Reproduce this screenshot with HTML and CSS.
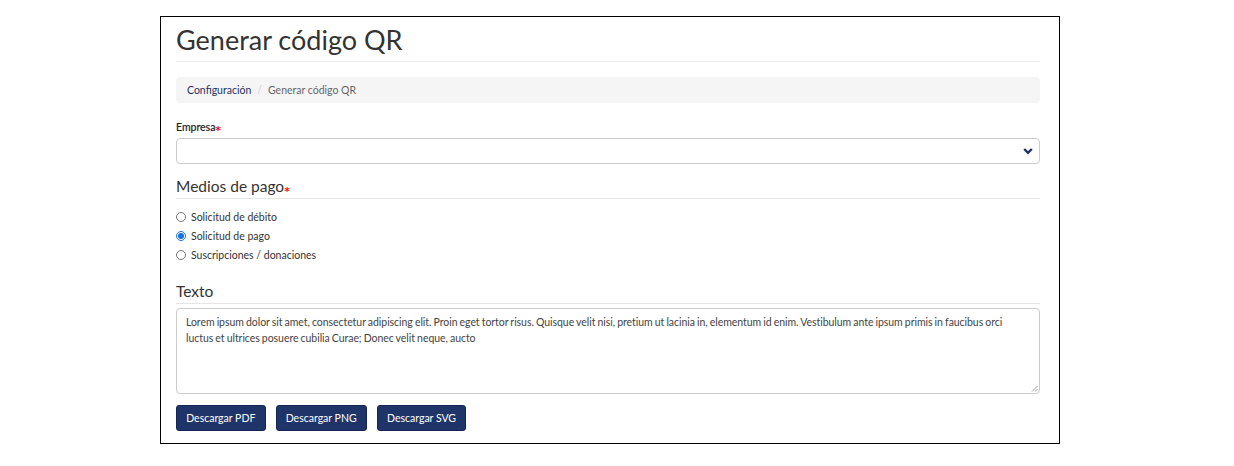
FILE: index.html
```html
<!DOCTYPE html>
<html lang="es">
<head>
<meta charset="utf-8">
<link rel="stylesheet" href="styles.css">
</head>
<body>
<div class="panel">
  <h1 class="title">Generar código QR</h1>
  <nav class="crumbs"><a class="crumb-link">Configuración</a><span class="sep">/</span><span class="crumb-cur">Generar código QR</span></nav>
  <label class="label">Empresa<span class="req">*</span></label>
  <div class="select">
    <svg class="chev" width="10" height="8" viewBox="0 0 10 8"><path d="M1.2 2 L5 5.8 L8.8 2" fill="none" stroke="#1f3163" stroke-width="2.4"/></svg>
  </div>
  <h2 class="section">Medios de pago<span class="req">*</span></h2>
  <div class="radios">
    <label class="radio"><span class="dot"></span>Solicitud de débito</label>
    <label class="radio"><span class="dot on"></span>Solicitud de pago</label>
    <label class="radio"><span class="dot"></span>Suscripciones / donaciones</label>
  </div>
  <h2 class="section texto">Texto</h2>
  <div class="textarea">Lorem ipsum dolor sit amet, consectetur adipiscing elit. Proin eget tortor risus. Quisque velit nisi, pretium ut lacinia in, elementum id enim. Vestibulum ante ipsum primis in faucibus orci luctus et ultrices posuere cubilia Curae; Donec velit neque, aucto<svg class="grip" width="7" height="7" viewBox="0 0 7 7"><path d="M6.5 1 L1 6.5 M6.5 4 L4 6.5" stroke="#888" stroke-width="0.8"/></svg></div>
  <div class="buttons">
    <button class="btn">Descargar PDF</button>
    <button class="btn">Descargar PNG</button>
    <button class="btn">Descargar SVG</button>
  </div>
</div>
</body>
</html>
```
FILE: styles.css
```css
* { box-sizing: border-box; }
body {
  margin: 0;
  padding: 16px 0 0 160px;
  font-family: Lato, "Open Sans", sans-serif;
  color: #333;
  background: #fff;
}
.panel {
  width: 900px;
  height: 428px;
  border: 1px solid #000;
  padding: 0 19px 0 15px;
  display: flex;
  flex-direction: column;
}
.title {
  margin: 6px 0 0;
  font-size: 27px;
  font-weight: 400;
  line-height: 34px;
  color: #333;
  padding-bottom: 4px;
  border-bottom: 1px solid #eee;
}
.crumbs {
  margin-top: 15px;
  height: 26px;
  background: #f5f5f5;
  border-radius: 4px;
  padding: 0 11px;
  display: flex;
  align-items: center;
  font-size: 10.5px;
}
.crumb-link { color: #1f3163; }
.sep { color: #ccc; margin: 0 6px; }
.crumb-cur { color: #666; }
.label {
  margin-top: 17px;
  font-size: 10.5px;
  font-weight: 400;
  color: #222;
  line-height: 14px;
  -webkit-text-stroke: 0.2px #222;
}
.req {
  color: #e4161e;
  font-family: "DejaVu Sans", sans-serif;
  font-weight: 700;
  font-size: 11px;
  line-height: 0;
  position: relative;
  top: 3px;
  -webkit-text-stroke: 0;
}
.select {
  margin-top: 4px;
  height: 26px;
  border: 1px solid #ccc;
  border-radius: 4px;
  display: flex;
  align-items: center;
  justify-content: flex-end;
  padding-right: 6px;
}
.section {
  margin: 13px 0 0;
  font-size: 15.5px;
  font-weight: 400;
  line-height: 18px;
  padding-bottom: 3px;
  border-bottom: 1px solid #e5e5e5;
  color: #333;
}
.radios {
  margin-top: 11px;
  display: flex;
  flex-direction: column;
  gap: 5px;
}
.radio {
  display: flex;
  align-items: center;
  font-size: 10.5px;
  line-height: 14px;
  color: #333;
}
.dot {
  width: 10px;
  height: 10px;
  border: 1px solid #767676;
  border-radius: 50%;
  margin: 0 5px 0 0;
  background: #fff;
}
.dot.on {
  border: 1px solid #1a73e8;
  background: radial-gradient(circle, #1a73e8 0 2.8px, #fff 3.2px);
}
.texto { margin-top: 20px; }
.textarea {
  position: relative;
  margin-top: 4px;
  height: 86px;
  border: 1px solid #ccc;
  border-radius: 4px;
  padding: 5px 9px;
  font-size: 10.5px;
  line-height: 16px;
  letter-spacing: -0.05px;
  word-spacing: -0.5px;
  color: #444;
}
.grip { position: absolute; right: 1px; bottom: 1px; }
.buttons {
  margin-top: 11px;
  display: flex;
  gap: 10px;
}
.btn {
  height: 26px;
  padding: 0 9.2px;
  background: #1f3468;
  color: #fff;
  border: 1px solid #142553;
  border-radius: 3px;
  font-family: Lato, sans-serif;
  font-size: 10.5px;
}
```
